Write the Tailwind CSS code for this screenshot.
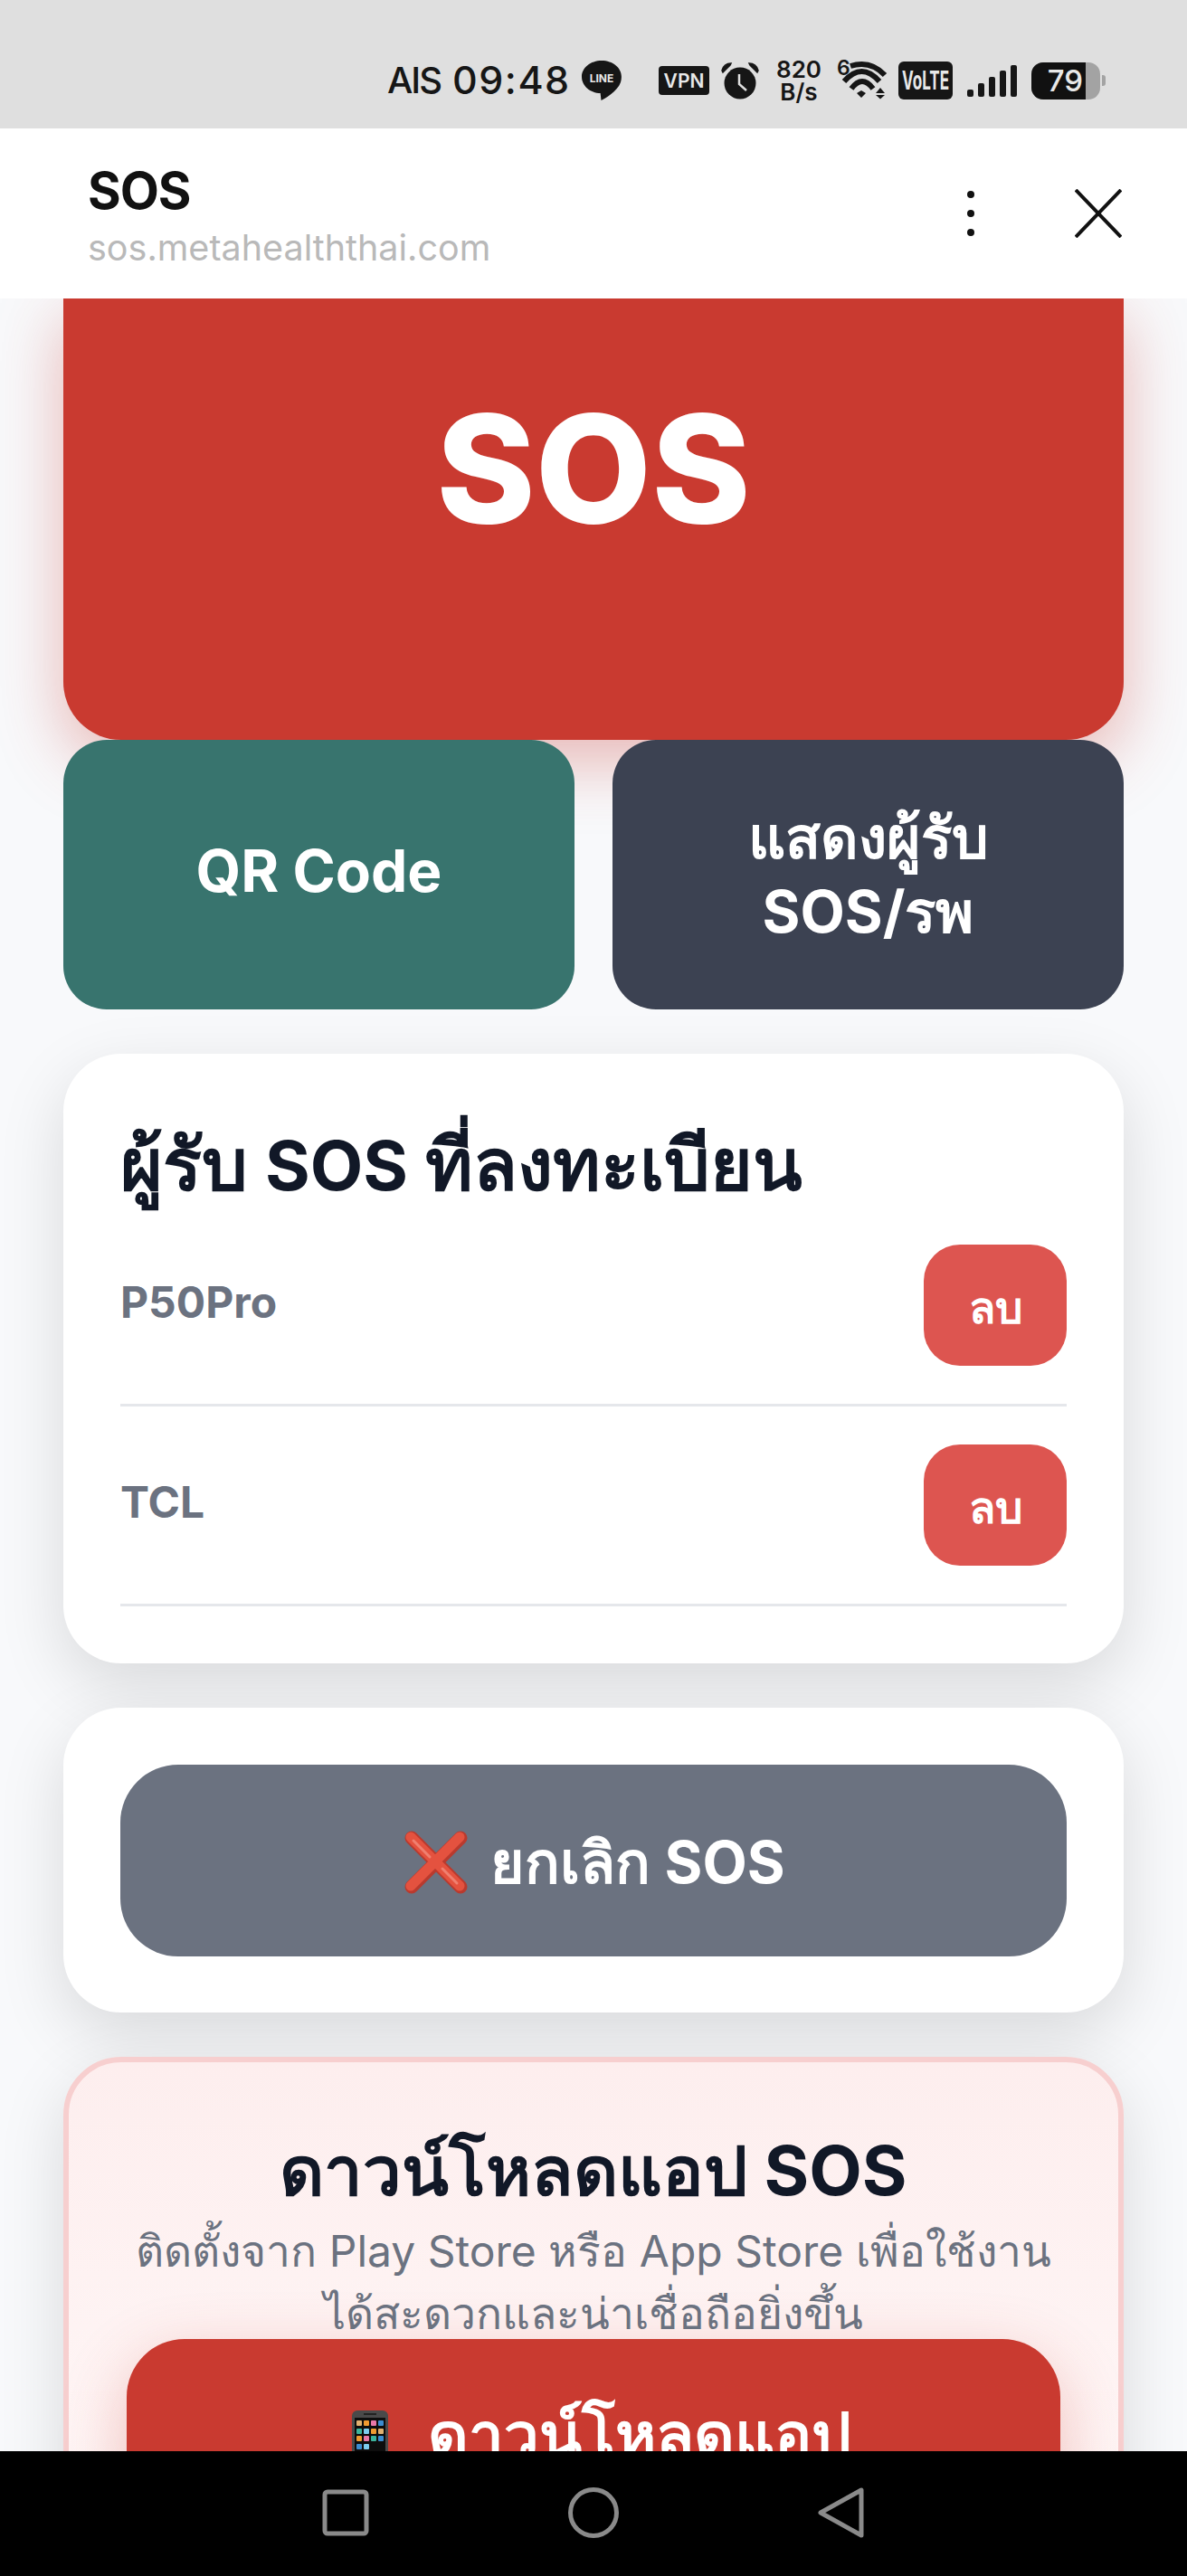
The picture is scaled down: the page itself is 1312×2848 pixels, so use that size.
<!DOCTYPE html>
<html lang="th">
<head>
  <meta charset="UTF-8">
  <title>SOS</title>
  <script src="https://cdn.jsdelivr.net/npm/@tailwindcss/browser@4"></script>
</head>
<body class="h-[2848px] w-[1312px] overflow-hidden bg-[#f8f9fb] font-['Inter','Noto_Sans',sans-serif]">
  <div class="flex h-full flex-col">
    <!-- status bar -->
    <div class="flex h-[142px] shrink-0 items-center bg-[#dfdfdf] pl-[428px] pt-[36px] font-['Inter',sans-serif] text-[#161616]">
      <span class="w-[66px] text-[40px] font-medium leading-[1.2] tracking-[-2px]">AIS</span>
      <span class="ml-[6px] w-[138px] text-[43px] font-medium leading-[1.2] tracking-[1.5px]">09:48</span>
      <svg class="ml-[4px]" width="46" height="46" viewBox="0 0 46 46">
        <path d="M23 1C10.8 1 1 8.8 1 19c0 10 9.6 18 20.6 18l.9 8c4-2 18-10 21.5-20 .6-2 .9-4 .9-6C45 8.800 35.200 1 23 1z" fill="#161616"/>
        <text x="23" y="25" text-anchor="middle" font-family="Inter" font-weight="700" font-size="12" fill="#e8e8e8">LINE</text>
      </svg>
      <svg class="ml-[40px]" width="56" height="32" viewBox="0 0 56 32">
        <rect width="56" height="32" rx="4" fill="#161616"/>
        <text x="28" y="24" text-anchor="middle" font-family="Inter" font-weight="600" font-size="21" fill="#e8e8e8">VPN</text>
      </svg>
      <svg class="ml-[13px]" width="42" height="42" viewBox="0 0 42 42">
        <circle cx="21" cy="24" r="17.500" fill="#161616"/>
        <path d="M1 10c1-5 5-8 10-8l-1 2-8 8zM41 10c-1-5-5-8-10-8l1 2 8 8z" fill="#161616" stroke="#161616" stroke-width="1.500"/>
        <path d="M20 14v11l8 7" fill="none" stroke="#dfdfdf" stroke-width="2.500"/>
      </svg>
      <div class="ml-[18px] w-[52px] text-center text-[26px] font-semibold leading-[25px]">820<br>B/s</div>
      <svg class="ml-[16px] overflow-visible" width="56" height="46" viewBox="0 0 56 46">
        <text x="0" y="17" font-family="Inter" font-weight="600" font-size="23" fill="#161616">6</text>
        <g fill="none" stroke="#161616" stroke-width="6">
          <path d="M15 7Q37 0 53 17"/>
          <path d="M8 24Q27.500 2 47 24"/>
          <path d="M16 32Q28 16 40 32"/>
        </g>
        <path d="M22 37l5-3 5 3-5 5zM43 37l5-6 5 6zM43 39h10l-5 4.500z" fill="#161616"/>
      </svg>
      <svg class="ml-[12px] overflow-visible" width="60" height="42" viewBox="0 0 60 42">
        <rect width="60" height="42" rx="6" fill="#161616"/>
        <text x="30" y="31" text-anchor="middle" textLength="52" lengthAdjust="spacingAndGlyphs" font-family="Inter" font-weight="700" font-size="28" fill="#e8e8e8">VoLTE</text>
      </svg>
      <div class="ml-[16px] flex h-[36px] items-end gap-[5px]">
        <div class="h-[8px] w-[7px] rounded-[2px] bg-[#161616]"></div>
        <div class="h-[15px] w-[7px] rounded-[2px] bg-[#161616]"></div>
        <div class="h-[22px] w-[7px] rounded-[2px] bg-[#161616]"></div>
        <div class="h-[29px] w-[7px] rounded-[2px] bg-[#161616]"></div>
        <div class="h-[35px] w-[7px] rounded-[2px] bg-[#161616]"></div>
      </div>
      <div class="ml-[16px] flex h-[41px] w-[76px] overflow-hidden rounded-[13px] bg-[#a3a3a3]">
        <div class="flex h-full w-[60px] items-center justify-end bg-[#111] pr-[3px] text-[33px] font-medium leading-none text-[#e8e8e8]">79</div>
      </div>
      <div class="ml-[2px] h-[12px] w-[4px] rounded-r-[3px] bg-[#a3a3a3]"></div>
    </div>

    <!-- browser header -->
    <div class="flex h-[188px] shrink-0 items-center bg-white pl-[97px] pr-[72px]">
      <div class="flex-1 pt-[10px]">
        <div class="text-[56px] font-bold leading-[66px] tracking-[-1px] text-[#111]">SOS</div>
        <div class="text-[39.5px] leading-[60px] text-[#b9b9b9]">sos.metahealththai.com</div>
      </div>
      <div class="flex w-[8px] flex-col gap-[13px]">
        <div class="size-[8px] rounded-full bg-[#111]"></div>
        <div class="size-[8px] rounded-full bg-[#111]"></div>
        <div class="size-[8px] rounded-full bg-[#111]"></div>
      </div>
      <svg class="ml-[111px]" width="52" height="54" viewBox="0 0 52 54">
        <path d="M1 1l50 52M51 1L1 53" stroke="#111" stroke-width="4" fill="none"/>
      </svg>
    </div>

    <!-- page -->
    <main class="flex-1 overflow-hidden px-[70px]">
      <div class="flex h-[488px] items-center justify-center rounded-b-[64px] bg-[#c93a30] pb-[112px] text-[166px] font-extrabold leading-none text-white shadow-[0_24px_72px_rgba(201,58,48,0.35)]">SOS</div>
      <div class="relative grid grid-cols-2 gap-[42px]">
        <div class="flex h-[298px] items-center justify-center rounded-[48px] bg-[#38746e] pb-[8px] text-[64px] font-bold text-white">QR Code</div>
        <div class="flex h-[298px] items-center justify-center rounded-[48px] bg-[#3c4252] text-center text-[64px] font-bold leading-[82px] text-white">แสดงผู้รับ<br>SOS/รพ</div>
      </div>

      <div class="mt-[49px] rounded-[64px] bg-white px-[63px] pb-[63px] pt-[64px] shadow-[0_24px_72px_rgba(0,0,0,0.13)]">
        <h2 class="mb-[30px] text-[80px] font-bold leading-[116px] text-[#111827]">ผู้รับ <span class="text-[76px]">SOS</span> ที่ลงทะเบียน</h2>
        <div class="mb-[42px] flex items-center justify-between border-b-[3px] border-[#e5e7eb] pb-[42px]">
          <span class="pb-[6px] text-[48px] font-bold text-[#6b7280]">P50Pro</span>
          <button class="h-[134px] w-[158px] rounded-[40px] bg-[#dd5550] pt-[6px] text-[48px] font-bold text-white">ลบ</button>
        </div>
        <div class="flex items-center justify-between border-b-[3px] border-[#e5e7eb] pb-[42px]">
          <span class="pb-[6px] text-[48px] font-bold text-[#6b7280]">TCL</span>
          <button class="h-[134px] w-[158px] rounded-[40px] bg-[#dd5550] pt-[6px] text-[48px] font-bold text-white">ลบ</button>
        </div>
      </div>

      <div class="mt-[49px] rounded-[64px] bg-white px-[63px] pb-[62px] pt-[63px] shadow-[0_24px_72px_rgba(0,0,0,0.13)]">
        <button class="flex h-[212px] w-full items-center justify-center gap-[24px] rounded-[64px] bg-[#6b7280] pl-[2px] pt-[4px] text-[64px] font-bold text-white">
          <svg width="72" height="72" viewBox="0 0 72 72">
            <path d="M9 9l54 54M63 9L9 63" stroke="#b93a2e" stroke-width="15" stroke-linecap="round"/>
            <path d="M8 8l54 54M62 8L8 62" stroke="#e4523f" stroke-width="11" stroke-linecap="round"/>
            <path d="M11 12l18 18M43 43l16 16" stroke="#ef8070" stroke-width="3" stroke-linecap="round"/>
          </svg>
          <span>ยกเลิก SOS</span>
        </button>
      </div>

      <div class="mt-[49px] rounded-[64px] border-[6px] border-[#f7cfcf] bg-gradient-to-b from-[#fdeeee] to-[#fff8f8] p-[64px] text-center shadow-[0_24px_72px_rgba(0,0,0,0.13)]">
        <h3 class="text-[76px] font-bold leading-[110px] text-[#111827]">ดาวน์โหลดแอป SOS</h3>
        <p class="text-[48px] leading-[69px] text-[#6b7280]">ติดตั้งจาก Play Store หรือ App Store เพื่อใช้งาน<br>ได้สะดวกและน่าเชื่อถือยิ่งขึ้น</p>
        <button class="-mt-[6px] flex h-[212px] w-full items-center justify-center gap-[44px] rounded-[64px] bg-[#c93a30] pl-[18px] text-[69px] font-bold text-white shadow-[0_24px_72px_rgba(201,58,48,0.3)]">
          <svg class="mt-[30px]" width="40" height="84" viewBox="0 0 40 84">
            <rect width="40" height="84" rx="6" fill="#4a4a4a"/>
            <rect x="3" y="8" width="34" height="68" fill="#0d0d0d"/>
            <rect x="13" y="3" width="14" height="2" fill="#222"/>
            <rect x="5" y="11" width="6" height="6" rx="1" fill="#e0b070"/>
            <rect x="13" y="11" width="6" height="6" rx="1" fill="#f09a30"/>
            <rect x="21" y="11" width="6" height="6" rx="1" fill="#e878a8"/>
            <rect x="29" y="11" width="6" height="6" rx="1" fill="#3c8cd0"/>
            <rect x="5" y="20" width="6" height="6" rx="1" fill="#3cb49c"/>
            <rect x="13" y="20" width="6" height="6" rx="1" fill="#7ccdf0"/>
            <rect x="21" y="20" width="6" height="6" rx="1" fill="#f09a30"/>
            <rect x="29" y="20" width="6" height="6" rx="1" fill="#e0b070"/>
            <rect x="5" y="28" width="6" height="6" rx="1" fill="#f09a30"/>
            <rect x="13" y="28" width="6" height="6" rx="1" fill="#e878a8"/>
            <rect x="21" y="28" width="6" height="6" rx="1" fill="#3cb49c"/>
            <rect x="29" y="28" width="6" height="6" rx="1" fill="#3c8cd0"/>
            <rect x="5" y="37" width="6" height="6" rx="1" fill="#3c8cd0"/>
            <rect x="13" y="37" width="6" height="6" rx="1" fill="#7ccdf0"/>
          </svg>
          <span>ดาวน์โหลดแอป</span>
        </button>
      </div>
    </main>

    <!-- nav -->
    <div class="flex h-[138px] shrink-0 items-center justify-center gap-[218px] bg-black pb-[2px]">
      <svg width="56" height="56" viewBox="0 0 56 56"><rect x="5" y="5" width="46" height="46" rx="3" fill="none" stroke="#8a8a8a" stroke-width="5"/></svg>
      <svg width="56" height="56" viewBox="0 0 56 56"><circle cx="28" cy="28" r="25.500" fill="none" stroke="#8a8a8a" stroke-width="5"/></svg>
      <svg width="56" height="56" viewBox="0 0 56 56"><path d="M50 3v50L5 28z" fill="none" stroke="#8a8a8a" stroke-width="5" stroke-linejoin="round"/></svg>
    </div>
  </div>
</body>
</html>
